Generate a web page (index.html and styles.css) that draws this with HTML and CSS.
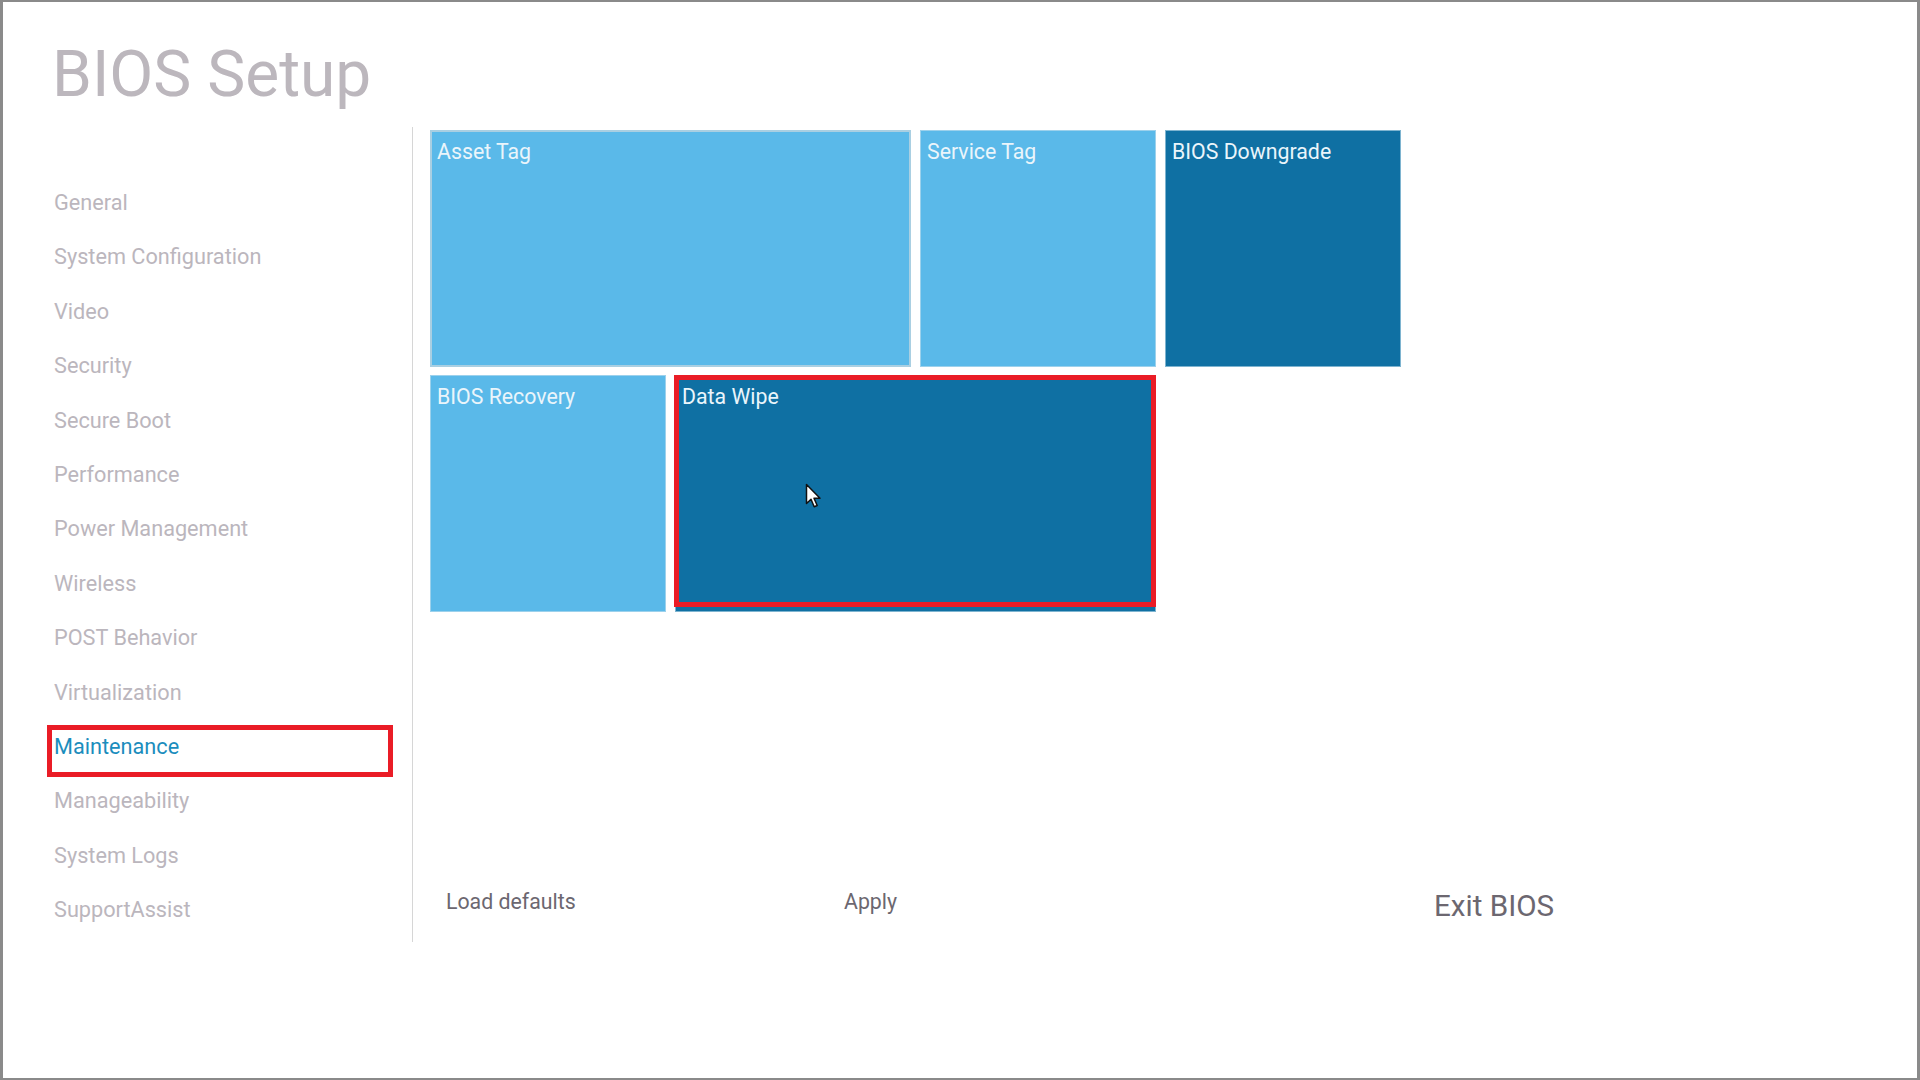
FILE: index.html
```html
<!DOCTYPE html>
<html lang="en">
<head>
<meta charset="utf-8">
<title>BIOS Setup</title>
<link rel="stylesheet" href="styles.css">
</head>
<body>
<div class="frame">
  <h1 class="title">BIOS Setup</h1>
  <div class="content">
    <nav class="sidebar">
      <ul class="nav">
        <li class="nav-item">General</li>
        <li class="nav-item">System Configuration</li>
        <li class="nav-item">Video</li>
        <li class="nav-item">Security</li>
        <li class="nav-item">Secure Boot</li>
        <li class="nav-item">Performance</li>
        <li class="nav-item">Power Management</li>
        <li class="nav-item">Wireless</li>
        <li class="nav-item">POST Behavior</li>
        <li class="nav-item">Virtualization</li>
        <li class="nav-item active">Maintenance</li>
        <li class="nav-item">Manageability</li>
        <li class="nav-item">System Logs</li>
        <li class="nav-item">SupportAssist</li>
      </ul>
    </nav>
    <main class="main">
      <div class="tiles">
        <div class="tile light wide hover">Asset Tag</div>
        <div class="tile light">Service Tag</div>
        <div class="tile dark">BIOS Downgrade</div>
        <div class="tile light">BIOS Recovery</div>
        <div class="tile dark wide selected">Data Wipe</div>
      </div>
      <div class="actions">
        <span class="btn btn-load">Load defaults</span>
        <span class="btn btn-apply">Apply</span>
        <span class="btn btn-exit">Exit BIOS</span>
      </div>
    </main>
  </div>
  <svg class="cursor" width="17" height="26" viewBox="0 0 17 26" aria-hidden="true">
    <path d="M1.5 1.5 L1.5 20.5 L6 16.3 L9.2 23.8 L12.2 22.5 L9 15.2 L15 15.2 Z" fill="#ffffff" stroke="#111111" stroke-width="1.5" stroke-linejoin="round"/>
  </svg>
</div>
</body>
</html>
```

FILE: styles.css
```css
html, body {
  margin: 0;
  padding: 0;
  background: #ffffff;
}

.frame {
  position: relative;
  box-sizing: border-box;
  width: 1920px;
  height: 1080px;
  border-style: solid;
  border-color: #8a8a8a;
  border-width: 2px 3px 2px 3px;
  background: #ffffff;
  font-family: Roboto, "Liberation Sans", sans-serif;
  overflow: hidden;
}

.title {
  margin: 0;
  padding: 35px 0 0 49px;
  font-size: 64px;
  font-weight: 400;
  line-height: 76px;
  color: #bcb7bd;
}

.content {
  display: flex;
  height: 815px;
  margin-top: 14px;
}

.sidebar {
  box-sizing: border-box;
  width: 410px;
  flex: none;
  border-right: 1px solid #d6d6d6;
}

.nav {
  list-style: none;
  margin: 0;
  padding: 49px 0 0 0;
}

.nav-item {
  position: relative;
  height: 54.4px;
  line-height: 54.4px;
  padding-left: 51px;
  font-size: 21.7px;
  color: #bbb6bd;
  white-space: nowrap;
}

.nav-item.active {
  color: #1b8dbd;
}

.nav-item.active::after {
  content: "";
  position: absolute;
  left: 44px;
  right: 19px;
  top: 5px;
  bottom: -3px;
  border: 5px solid #ea1c26;
}

.main {
  flex: 1;
  display: flex;
  flex-direction: column;
  padding: 3px 0 0 17px;
}

.tiles {
  display: grid;
  grid-template-columns: repeat(4, 236px);
  grid-auto-rows: 237px;
  column-gap: 9px;
  row-gap: 8px;
}

.tile {
  position: relative;
  box-sizing: border-box;
  padding: 8px 6px;
  font-size: 21.3px;
  line-height: 26px;
  color: #eaf5fb;
  border: 1px solid rgba(200, 225, 238, 0.6);
}

.tile.wide {
  grid-column: span 2;
}

.tile.light {
  background: #5ab9e9;
}

.tile.dark {
  background: #0f70a3;
}

.tile.hover {
  border: 2px solid #a9cfe2;
  padding: 7px 5px;
}

.tile.selected::after {
  content: "";
  position: absolute;
  left: -2px;
  right: -1px;
  top: -1px;
  bottom: 4px;
  border: 5px solid #ea1c26;
}

.actions {
  display: flex;
  align-items: center;
  margin-top: auto;
  height: 60px;
  padding: 0 0 11px 16px;
  color: #6c6770;
}

.btn {
  white-space: nowrap;
}

.btn-load {
  width: 398px;
  font-size: 21.3px;
}

.btn-apply {
  width: 590px;
  font-size: 21.3px;
}

.btn-exit {
  font-size: 29.6px;
  padding-top: 10px;
}

.cursor {
  position: absolute;
  left: 802px;
  top: 481px;
}
```
